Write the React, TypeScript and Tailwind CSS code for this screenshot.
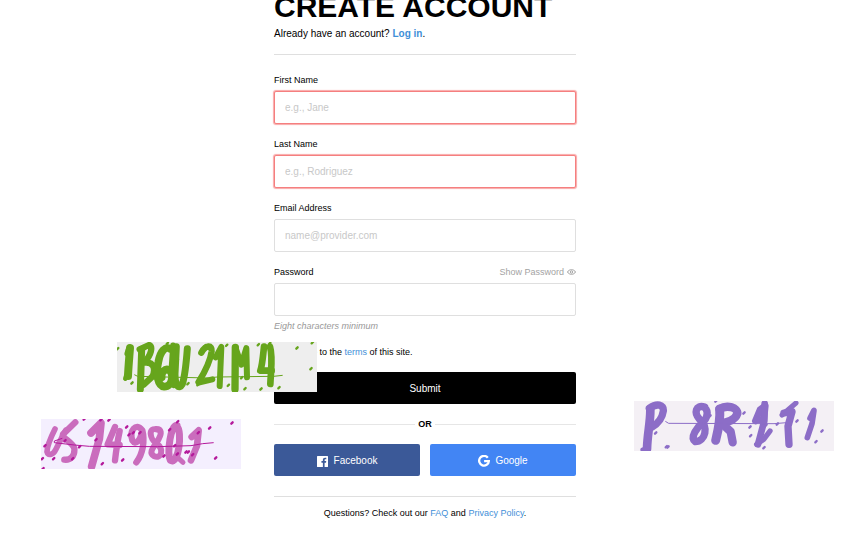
import type { ReactNode } from "react";

type Stroke = { d: string; w: number };

type SketchProps = {
  label: string;
  color: string;
  dotColor: string;
  strokes: Stroke[];
  line: string;
  lineWidth: number;
  dots: [number, number][];
};

function Sketch({ label, color, dotColor, strokes, line, lineWidth, dots }: SketchProps) {
  return (
    <svg viewBox="0 0 600 150" className="block h-full w-full" role="img" aria-label={label}>
      <g fill="none" stroke={color} strokeLinecap="round" strokeLinejoin="round">
        {strokes.map((s) => (
          <path key={s.d} d={s.d} strokeWidth={s.w} />
        ))}
      </g>
      <path d={line} fill="none" stroke={dotColor} strokeWidth={lineWidth} />
      {dots.map(([x, y]) => (
        <path key={`${x}-${y}`} d={`M${x - 2} ${y + 2}l4 -4`} stroke={dotColor} strokeWidth={7} strokeLinecap="round" />
      ))}
    </svg>
  );
}

const green: SketchProps = {
  label: "Green brush sketch",
  color: "#66a51c",
  dotColor: "#66a51c",
  lineWidth: 3,
  line: "M52 98L62 103L275 108L300 105L470 103L497 100",
  strokes: [
    { d: "M39 18C37 45 34 75 33 102", w: 24 },
    { d: "M33 22L29 36M28 100L25 110", w: 14 },
    { d: "M74 22L70 142", w: 21 },
    { d: "M68 22L96 9C108 14 104 36 82 62C112 58 116 84 106 104L80 128", w: 19 },
    { d: "M158 20C146 12 130 26 124 60C116 96 122 132 142 134C166 134 172 96 156 84C144 78 132 92 134 106", w: 23 },
    { d: "M178 14L174 96C174 132 186 144 196 126C204 102 208 60 211 20", w: 21 },
    { d: "M168 10L164 70L170 130", w: 17 },
    { d: "M253 32C266 8 286 8 284 28C280 58 262 92 245 120", w: 19 },
    { d: "M245 122L286 112", w: 18 },
    { d: "M296 46L313 15L308 132", w: 18 },
    { d: "M355 16L354 142", w: 22 },
    { d: "M355 16L373 68L388 18L390 106", w: 18 },
    { d: "M441 14C438 42 436 70 430 86L464 86", w: 20 },
    { d: "M459 14C468 42 462 80 460 126", w: 20 },
  ],
  dots: [
    [2, 20], [45, 123], [151, 4], [181, 55], [213, 125], [264, 11], [329, 10], [243, 128], [334, 130],
    [384, 140], [374, 107], [432, 141], [424, 8], [458, 4], [486, 137], [540, 18], [582, 80], [586, 2],
  ],
};

const pink: SketchProps = {
  label: "Pink brush sketch",
  color: "#ca6cbd",
  dotColor: "#b4189b",
  lineWidth: 3,
  line: "M64 58L40 66L40 71L100 78L145 82L350 83L450 80L485 74L518 71",
  strokes: [
    { d: "M42 30C30 54 18 82 18 98C22 112 38 106 44 92L62 56L74 34", w: 17 },
    { d: "M103 10L66 46C62 58 94 68 100 88C102 112 88 124 70 122", w: 19 },
    { d: "M150 42L180 12L175 60L152 142", w: 23 },
    { d: "M222 24L200 76L236 78", w: 19 },
    { d: "M236 36C230 64 226 90 222 124", w: 19 },
    { d: "M302 32C286 10 264 34 274 64C284 80 298 66 304 34C312 66 306 104 286 130", w: 19 },
    { d: "M350 32C318 22 328 62 345 72C372 92 360 120 340 112C316 100 348 74 354 58C362 44 362 30 346 30", w: 18 },
    { d: "M408 20C388 16 378 102 388 124C414 140 424 36 408 22", w: 21 },
    { d: "M404 110L426 130M392 118L396 128", w: 15 },
    { d: "M452 54L473 34L468 80L450 124", w: 20 },
  ],
  dots: [
    [12, 80], [4, 119], [38, 119], [72, 65], [95, 119], [116, 83], [130, 0], [180, 2], [204, 3], [165, 62],
    [184, 134], [245, 123], [257, 24], [264, 47], [277, 41], [297, 41], [386, 32], [410, 8], [401, 80],
    [409, 105], [369, 111], [435, 99], [442, 99], [455, 107], [472, 41], [506, 27], [573, 12], [524, 117], [6, 149],
  ],
};

const purple: SketchProps = {
  label: "Purple brush sketch",
  color: "#8c6dc7",
  dotColor: "#8c6dc7",
  lineWidth: 3,
  line: "M94 61L104 67L420 68L470 64",
  strokes: [
    { d: "M49 24C50 60 40 100 39 144", w: 26 },
    { d: "M46 22C68 6 90 10 88 30C84 56 68 70 54 78", w: 22 },
    { d: "M26 146L42 142", w: 14 },
    { d: "M212 18C184 10 180 36 196 54C226 76 214 122 184 122C166 110 190 78 210 60C224 44 222 24 208 18", w: 22 },
    { d: "M257 24C260 60 252 90 245 118", w: 27 },
    { d: "M256 24C280 10 312 20 310 38C304 58 276 66 262 66L290 92L296 124", w: 25 },
    { d: "M364 60L378 26L394 14L388 70L372 130", w: 20 },
    { d: "M392 8L391 60L374 56", w: 20 },
    { d: "M368 130L390 114L408 90", w: 16 },
    { d: "M444 42L486 6", w: 15 },
    { d: "M450 36L474 32L462 76L465 130", w: 22 },
    { d: "M528 52L540 28L534 68L520 110", w: 17 },
  ],
  dots: [
    [65, 96], [97, 137], [102, 138], [228, 45], [246, 0], [330, 36], [348, 78], [350, 104], [396, 73],
    [390, 140], [430, 69], [489, 60], [546, 122], [564, 90],
  ],
};

function FloatingPicture({ place, children }: { place: string; children: ReactNode }) {
  return <div className={`absolute h-[50px] w-[200px] overflow-hidden ${place}`}>{children}</div>;
}

type FieldProps = {
  id: string;
  label: string;
  type?: string;
  placeholder?: string;
  invalid?: boolean;
  action?: ReactNode;
};

function Field({ id, label, type = "text", placeholder, invalid = false, action }: FieldProps) {
  return (
    <div>
      <div className="flex justify-between">
        <label htmlFor={id}>{label}</label>
        {action}
      </div>
      <input
        id={id}
        type={type}
        placeholder={placeholder}
        aria-invalid={invalid}
        className={`mt-1 block h-[33px] w-full rounded-xs border bg-white px-2.5 text-[10px] outline-none placeholder:text-[#c8c8c8] ${
          invalid ? "border-[#f57f7f] shadow-[0_0_1px_1px_#f9a8a8]" : "border-[#dfdfdf]"
        }`}
      />
    </div>
  );
}

function EyeIcon() {
  return (
    <svg viewBox="0 0 18 12" className="h-1.5 w-[9px]" fill="none" stroke="#a3a3a3" strokeWidth={2} aria-hidden="true">
      <path d="M1 6C4 -.2 14 -.2 17 6C14 12.2 4 12.2 1 6Z" />
      <circle cx="9" cy="6" r="2.4" />
    </svg>
  );
}

function FacebookIcon() {
  return (
    <svg viewBox="0 0 24 24" className="size-[11px]" fill="currentColor" aria-hidden="true">
      <path d="M22.675 0H1.325C.593 0 0 .593 0 1.325v21.351C0 23.407.593 24 1.325 24H12.82v-9.294H9.692v-3.622h3.128V8.413c0-3.1 1.893-4.788 4.659-4.788 1.325 0 2.463.099 2.795.143v3.24h-1.918c-1.504 0-1.795.715-1.795 1.763v2.313h3.587l-.467 3.622h-3.12V24h6.116c.73 0 1.323-.593 1.323-1.325V1.325C24 .593 23.407 0 22.675 0z" />
    </svg>
  );
}

function GoogleIcon() {
  return (
    <svg viewBox="0 0 24 24" className="size-3" fill="none" stroke="currentColor" strokeWidth={4.6} aria-hidden="true">
      <path d="M19.6 5.4A9.7 9.7 0 1 0 21.7 12.1H12.2" />
    </svg>
  );
}

export default function App() {
  return (
    <div className="relative overflow-hidden bg-white px-4 pb-5 font-['Liberation_Sans',Arial,sans-serif] text-[9px] leading-[14px] text-black">
      <main className="mx-auto -mt-2 max-w-[302px]">
        <h1 className="text-[30px] leading-[30px] font-bold whitespace-nowrap">CREATE ACCOUNT</h1>
        <p className="mt-1 text-[10px] leading-[15px]">
          Already have an account?{" "}
          <a href="#login" className="font-bold text-[#3f8fd8]">
            Log in
          </a>
          .
        </p>
        <hr className="mt-[13px] border-[#dfdfdf]" />

        <form className="mt-[18px]" onSubmit={(e) => e.preventDefault()}>
          <div className="flex flex-col gap-[13px]">
            <Field id="first" label="First Name" placeholder="e.g., Jane" invalid />
            <Field id="last" label="Last Name" placeholder="e.g., Rodriguez" invalid />
            <Field id="email" label="Email Address" type="email" placeholder="name@provider.com" />
            <Field
              id="password"
              label="Password"
              type="password"
              action={
                <button type="button" className="flex items-center gap-[3px] text-[#a3a3a3]">
                  Show Password
                  <EyeIcon />
                </button>
              }
            />
          </div>
          <p className="mt-[3px] text-[#999] italic">Eight characters minimum</p>

          <div className="mt-3 flex items-center gap-[5px]">
            <input id="terms" type="checkbox" className="size-2.5" />
            <label htmlFor="terms">
              I agree to the{" "}
              <a href="#terms" className="text-[#3f8fd8]">
                terms
              </a>{" "}
              of this site.
            </label>
          </div>

          <button type="submit" className="mt-[13px] block h-8 w-full rounded-xs bg-black pt-0.5 text-[10px] text-white">
            Submit
          </button>
        </form>

        <div className="mt-[13px] flex items-center gap-[3px]">
          <span className="h-px flex-1 bg-[#e6e6e6]" />
          <span className="font-bold">OR</span>
          <span className="h-px flex-1 bg-[#e6e6e6]" />
        </div>

        <div className="mt-[13px] grid grid-cols-2 gap-2.5 text-[10px] text-white">
          <button type="button" className="flex h-8 items-center justify-center gap-1.5 rounded-xs bg-[#3b5998] pt-0.5">
            <FacebookIcon />
            Facebook
          </button>
          <button type="button" className="flex h-8 items-center justify-center gap-[5px] rounded-xs bg-[#4285f4] pt-0.5">
            <GoogleIcon />
            Google
          </button>
        </div>

        <hr className="mt-5 border-[#dfdfdf]" />
        <p className="mt-[9px] text-center">
          Questions? Check out our{" "}
          <a href="#faq" className="text-[#3f8fd8]">
            FAQ
          </a>{" "}
          and{" "}
          <a href="#privacy" className="text-[#3f8fd8]">
            Privacy Policy
          </a>
          .
        </p>
      </main>

      <FloatingPicture place="top-[342px] left-[117px] bg-[#eeeeee]">
        <Sketch {...green} />
      </FloatingPicture>
      <FloatingPicture place="top-[419px] left-[41px] bg-[#f4effe]">
        <Sketch {...pink} />
      </FloatingPicture>
      <FloatingPicture place="top-[401px] left-[634px] bg-[#f4f0f5]">
        <Sketch {...purple} />
      </FloatingPicture>
    </div>
  );
}
